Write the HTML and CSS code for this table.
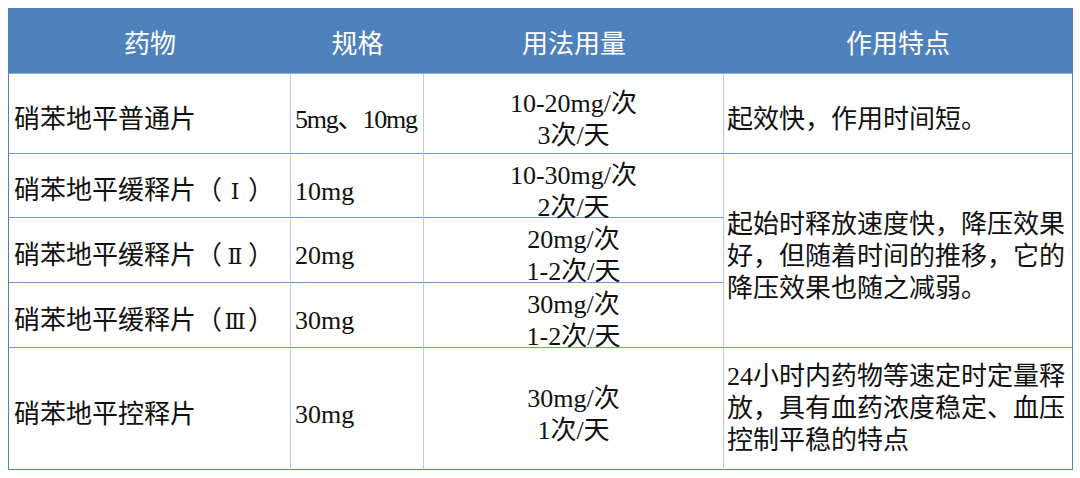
FILE: index.html
```html
<!DOCTYPE html>
<html lang="zh-CN">
<head>
<meta charset="utf-8">
<title>硝苯地平</title>
<link rel="stylesheet" href="styles.css">
</head>
<body>
<table class="drug-table">
  <colgroup>
    <col class="c1"><col class="c2"><col class="c3"><col class="c4">
  </colgroup>
  <thead>
    <tr class="head-row">
      <th>药物</th>
      <th>规格</th>
      <th>用法用量</th>
      <th class="last">作用特点</th>
    </tr>
  </thead>
  <tbody>
    <tr class="r1">
      <td class="name"><div class="cell">硝苯地平普通片</div></td>
      <td class="spec"><div class="cell tight">5mg、10mg</div></td>
      <td class="dose"><div class="cell">10-20mg/次<br>3次/天</div></td>
      <td class="feat last"><div class="cell">起效快，作用时间短。</div></td>
    </tr>
    <tr class="r2">
      <td class="name"><div class="cell">硝苯地平缓释片（<span class="roman">Ⅰ</span>）</div></td>
      <td class="spec"><div class="cell">10mg</div></td>
      <td class="dose"><div class="cell">10-30mg/次<br>2次/天</div></td>
      <td class="feat last" rowspan="3"><div class="cell">起始时释放速度快，降压效果<br>好，但随着时间的推移，它的<br>降压效果也随之减弱。</div></td>
    </tr>
    <tr class="r3">
      <td class="name"><div class="cell">硝苯地平缓释片（<span class="roman">Ⅱ</span>）</div></td>
      <td class="spec"><div class="cell">20mg</div></td>
      <td class="dose"><div class="cell">20mg/次<br>1-2次/天</div></td>
    </tr>
    <tr class="r4">
      <td class="name"><div class="cell">硝苯地平缓释片（<span class="roman">Ⅲ</span>）</div></td>
      <td class="spec"><div class="cell">30mg</div></td>
      <td class="dose"><div class="cell">30mg/次<br>1-2次/天</div></td>
    </tr>
    <tr class="r5">
      <td class="name"><div class="cell">硝苯地平控释片</div></td>
      <td class="spec"><div class="cell">30mg</div></td>
      <td class="dose"><div class="cell">30mg/次<br>1次/天</div></td>
      <td class="feat last"><div class="cell cell-flat">24小时内药物等速定时定量释<br>放，具有血药浓度稳定、血压<br>控制平稳的特点</div></td>
    </tr>
  </tbody>
</table>
</body>
</html>
```

FILE: styles.css
```css
html, body {
  margin: 0;
  padding: 0;
  background: #ffffff;
}
body {
  padding: 8px;
  font-family: "Liberation Serif", "Noto Sans CJK SC", serif;
  font-size: 26px;
  color: #111111;
}
.drug-table {
  border-collapse: separate;
  border-spacing: 0;
  width: 1064px;
  table-layout: fixed;
  border-top: 1px solid #4f81bd;
  border-left: 1px solid #4f81bd;
}
.c1 { width: 282px; }
.c2 { width: 133px; }
.c3 { width: 300px; }
.c4 { width: 349px; }

.head-row { height: 65px; }
.head-row th {
  background: #4f81bd;
  color: #ffffff;
  font-weight: normal;
  text-align: center;
  vertical-align: middle;
  padding: 7px 0 0 0;
  border-bottom: 1px solid #8eaedb;
  line-height: 32px;
}
.head-row th.last { border-right: 1px solid #4f81bd; }

td {
  padding: 0;
  line-height: 32px;
  vertical-align: middle;
  border-bottom: 1px solid #6f96cd;
  border-right: 1px solid #b7cae6;
  white-space: nowrap;
}
td.last { border-right: 1px solid #4f81bd; }
.r5 td { border-bottom: 1px solid #4f81bd; }

.cell {
  padding-top: 5px;
  margin-bottom: -7px;
}
.cell-flat {
  padding-top: 0;
  margin-bottom: 0;
}
.tight { letter-spacing: -1.2px; }

.roman {
  display: inline-block;
  width: 26px;
  text-align: center;
  font-family: "DejaVu Serif", "Liberation Serif", serif;
  font-size: 22px;
}

.name { padding-left: 5px; }
.spec { padding-left: 4px; }
.dose { text-align: center; }
.feat { padding-left: 3px; }

.r1 { height: 80px; }
.r2 { height: 64px; }
.r3 { height: 65px; }
.r4 { height: 65px; }
.r5 { height: 122px; }
```
